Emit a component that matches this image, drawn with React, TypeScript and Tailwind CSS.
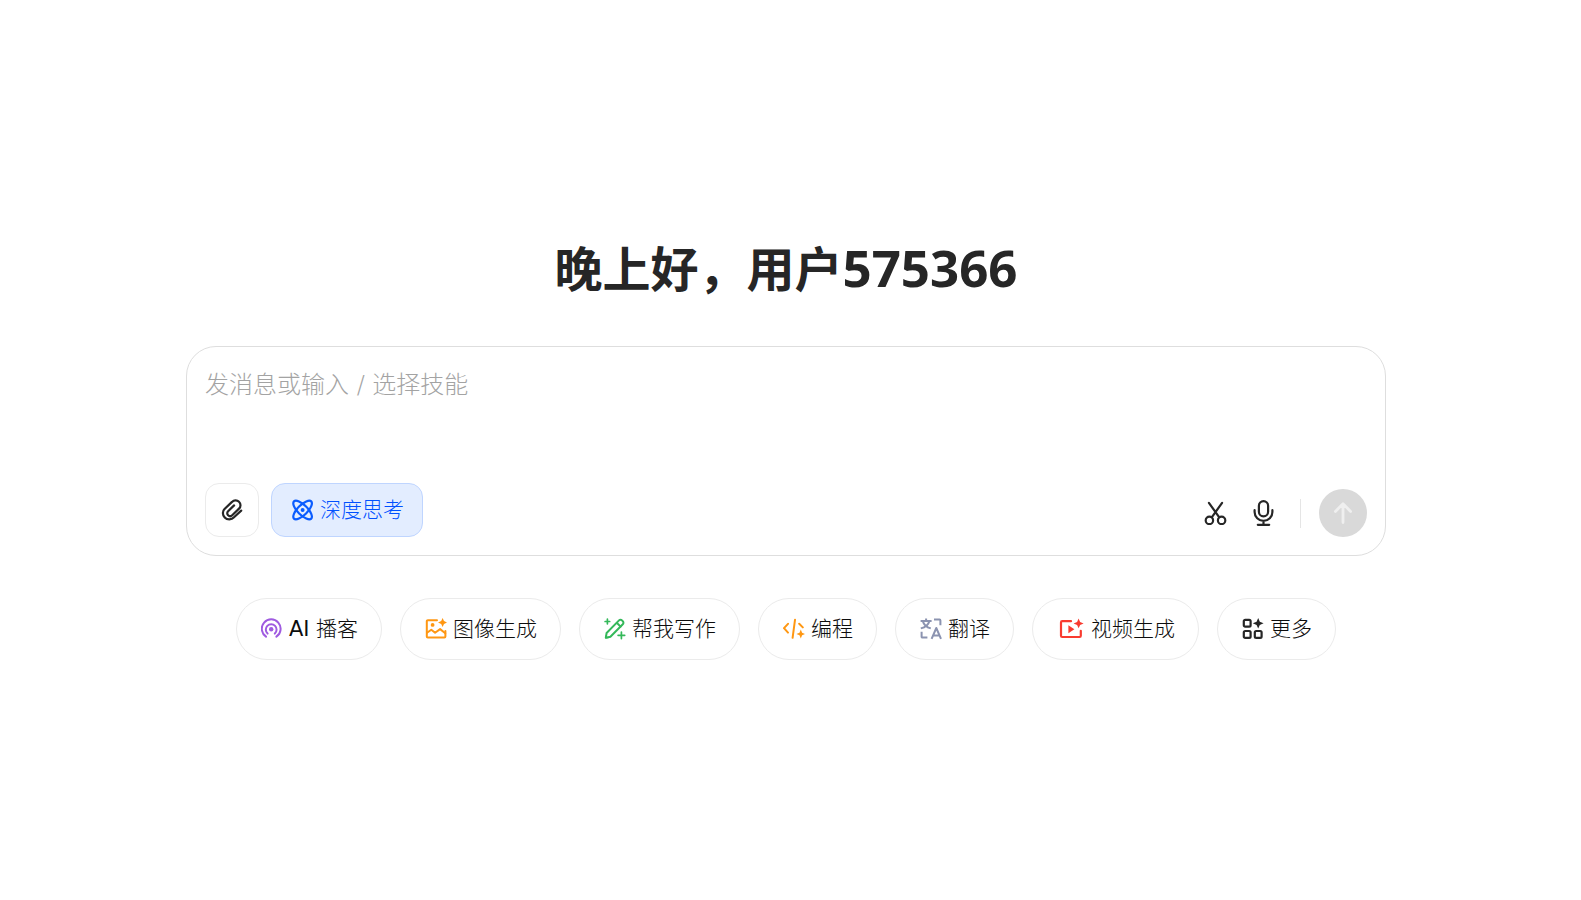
import { useState, type ReactNode } from 'react';

const PodcastIcon = () => (
  <svg className="h-[22px] w-[22px] shrink-0" viewBox="0 0 22 22" fill="none" stroke="#9f5be0" strokeWidth="2" strokeLinecap="round">
    <path d="M5 18.6A9.4 9.4 0 1 1 15.4 18.6" />
    <path d="M6.6 15.6A5.4 5.4 0 1 1 13.8 15.6" />
    <circle cx="10.2" cy="11.2" r="2.2" fill="#9f5be0" stroke="none" />
  </svg>
);

const ImageIcon = () => (
  <svg className="h-[22px] w-[22px] shrink-0" viewBox="0 0 22 22" fill="none" stroke="#ff9712" strokeWidth="2" strokeLinecap="round" strokeLinejoin="round">
    <path d="M12 2.2H2.8a1 1 0 0 0-1 1v15.4a1 1 0 0 0 1 1h16.6a1 1 0 0 0 1-1V13" />
    <path d="M2 14.8l4.3-3.1 3.8 3 5-3.6 5.2 4.1" />
    <circle cx="7.6" cy="6.9" r="1.9" fill="#ff9712" stroke="none" />
    <path d="M17.6 0l1.4 3.1 3.2 1.4-3.2 1.4L17.6 9l-1.4-3.1L13 4.5l3.2-1.4z" fill="#ff9712" stroke="none" />
  </svg>
);

const WriteIcon = () => (
  <svg className="h-[22px] w-[22px] shrink-0" viewBox="0 0 22 22" fill="none" stroke="#34b85a" strokeWidth="2" strokeLinecap="round" strokeLinejoin="round">
    <path d="M1.8 19.8l.8-4.8L15 2.4a2.1 2.1 0 0 1 3 0l.8.8a2.1 2.1 0 0 1 0 3L6.4 18.8z" />
    <path d="M13.2 5.2l3.4 3.4" />
    <path d="M1.5 17l3.2 3.2-3.4.4z" fill="#34b85a" stroke="none" />
    <path d="M3.4 1.2v4.6M1.1 3.5h4.6M17.4 14v6.6M14.1 17.3h6.6" strokeWidth="1.7" />
  </svg>
);

const CodeIcon = () => (
  <svg className="h-[22px] w-[22px] shrink-0" viewBox="0 0 22 22" fill="none" stroke="#ff9712" strokeWidth="2" strokeLinecap="round" strokeLinejoin="round">
    <path d="M5 5.8L1 10.2l4 4.4M12 1.8l-2.4 18M16.2 5.8l3.6 3.6" />
    <path d="M17.8 11.6l1.3 3.1 3.1 1.3-3.1 1.3-1.3 3.1-1.3-3.1-3.1-1.3 3.1-1.3z" fill="#ff9712" stroke="none" />
  </svg>
);

const TranslateIcon = () => (
  <svg className="h-[22px] w-[22px] shrink-0" viewBox="0 0 22 22" fill="none" stroke="#8b93b0" strokeWidth="2" strokeLinejoin="round">
    <path d="M.6 3h11M6.1.4V3M3 3.4c.8 3.3 3.4 5.7 7.8 7M9.2 3.4c-.8 3.3-3.6 5.7-8.4 7" />
    <path d="M14 1.6h5.6a.8.8 0 0 1 .8.8v4.8M1.6 13.8v5a.8.8 0 0 0 .8.8h5" />
    <path d="M11.6 20.8l4.7-10.8 4.7 10.8M13 17.4h6.6" />
  </svg>
);

const VideoIcon = () => (
  <svg className="h-[22px] w-7 shrink-0" viewBox="1 0 28 22" fill="none" stroke="#f93b30" strokeWidth="2.2" strokeLinecap="round" strokeLinejoin="round">
    <path d="M15 3.2H6.2a1.2 1.2 0 0 0-1.2 1.2v13.4a1.2 1.2 0 0 0 1.2 1.2h17.4a1.2 1.2 0 0 0 1.2-1.2v-5" />
    <path d="M12.4 7.2l6 4-6 4z" fill="#f93b30" stroke="none" />
    <path d="M22.6.6l1.5 3.3 3.5 1.5-3.5 1.5-1.5 3.3-1.5-3.3-3.5-1.5 3.5-1.5z" fill="#f93b30" stroke="none" />
  </svg>
);

const MoreIcon = () => (
  <svg className="h-[22px] w-[22px] shrink-0" viewBox="0 0 22 22" fill="none" stroke="#262626" strokeWidth="2.2">
    <rect x="1.8" y="1.8" width="6.8" height="6.8" rx="1.4" />
    <rect x="1.8" y="13" width="6.8" height="6.8" rx="1.4" />
    <rect x="12.8" y="13" width="6.8" height="6.8" rx="1.4" />
    <path d="M16.2 0l1.6 3.7 3.8 1.6-3.8 1.6-1.6 3.7-1.6-3.7-3.8-1.6 3.8-1.6z" fill="#262626" stroke="none" />
  </svg>
);

const ClipIcon = () => (
  <svg className="h-[22px] w-[22px]" viewBox="0 0 22 22" fill="none" stroke="#262626" strokeWidth="2.2" strokeLinecap="round" strokeLinejoin="round">
    <path d="M20.2 11.6l-7.2 6.7a6.3 6.3 0 0 1-9.3.1 6 6 0 0 1 .1-8.7l7.2-6.8a4.9 4.9 0 0 1 7-.1 4.6 4.6 0 0 1 0 6.8l-6.8 6.6a2.9 2.9 0 0 1-4.1 0 2.8 2.8 0 0 1 0-4l6-5.8" />
  </svg>
);

const ThinkIcon = () => (
  <svg className="h-[22px] w-[22px]" viewBox="0 0 22 22" fill="none" stroke="#0a5cff" strokeWidth="2.2">
    <ellipse cx="10.6" cy="11" rx="12.2" ry="4.9" transform="rotate(45 10.6 11)" />
    <ellipse cx="10.6" cy="11" rx="12.2" ry="4.9" transform="rotate(-45 10.6 11)" />
    <circle cx="10.6" cy="11" r="2" fill="#0a5cff" stroke="none" />
  </svg>
);

const ScissorsIcon = () => (
  <svg className="h-6 w-6" viewBox="0 0 24 24" fill="none" stroke="#262626" strokeWidth="2.2" strokeLinecap="round">
    <path d="M4.9 1.8l10 14M18.1 1.8l-10 14" />
    <circle cx="5.4" cy="19.4" r="3.7" />
    <circle cx="17.6" cy="19.4" r="3.7" />
  </svg>
);

const MicIcon = () => (
  <svg className="h-[26px] w-6" viewBox="0 0 24 26" fill="none" stroke="#262626" strokeWidth="2.2" strokeLinecap="round">
    <rect x="6.9" y="1.2" width="9.2" height="15.2" rx="4.6" />
    <path d="M2.6 10.2v1.8a8.9 8.9 0 0 0 17.8 0v-1.8M11.5 21v3.6M5.8 24.8h11.4" />
  </svg>
);

interface Skill {
  id: string;
  label: ReactNode;
  icon: ReactNode;
}

const skills: Skill[] = [
  { id: 'podcast', label: <><span className="font-normal">AI </span>播客</>, icon: <PodcastIcon /> },
  { id: 'image', label: '图像生成', icon: <ImageIcon /> },
  { id: 'write', label: '帮我写作', icon: <WriteIcon /> },
  { id: 'code', label: '编程', icon: <CodeIcon /> },
  { id: 'translate', label: '翻译', icon: <TranslateIcon /> },
  { id: 'video', label: '视频生成', icon: <VideoIcon /> },
  { id: 'more', label: '更多', icon: <MoreIcon /> },
];

export default function App() {
  const [message, setMessage] = useState('');
  const [deepThink, setDeepThink] = useState(true);

  return (
    <main className="flex min-h-screen flex-col items-center bg-white pt-[234px] pr-[9px] font-['DejaVu_Sans','Noto_Sans_CJK_SC',sans-serif] text-[#262626]">
      <h1 className="font-['Noto_Sans','Noto_Sans_CJK_SC',sans-serif] text-5xl leading-[66px] font-bold">
        晚上好，用户<span className="text-[51px]">575366</span>
      </h1>

      <form
        onSubmit={(e) => e.preventDefault()}
        className="mt-11 flex w-full max-w-[1200px] flex-col justify-between rounded-[30px] border border-[#dedede] px-[18px] pt-5 pb-[18px]"
      >
        <textarea
          aria-label="发消息"
          value={message}
          onChange={(e) => setMessage(e.target.value)}
          placeholder="发消息或输入 / 选择技能"
          className="h-[116px] w-full resize-none text-2xl leading-9 font-light outline-none placeholder:text-[#a3a3a3]"
        />
        <div className="flex items-end justify-between">
          <div className="flex gap-3">
            <button type="button" aria-label="上传附件" className="flex h-[54px] w-[54px] items-center justify-center rounded-[14px] border border-[#ebebeb]">
              <ClipIcon />
            </button>
            <button
              type="button"
              aria-pressed={deepThink}
              onClick={() => setDeepThink(!deepThink)}
              className="flex h-[54px] items-center gap-1.5 rounded-[14px] border border-[#bfd5ff] bg-[#e3edff] pr-[18px] pl-5 text-[21px] font-light text-[#0050ff]"
            >
              <ThinkIcon />
              <span className="pt-0.5">深度思考</span>
            </button>
          </div>
          <div className="flex h-12 items-center">
            <button type="button" aria-label="截图" className="flex h-12 w-12 items-center justify-center">
              <ScissorsIcon />
            </button>
            <button type="button" aria-label="语音输入" className="flex h-12 w-12 items-center justify-center">
              <MicIcon />
            </button>
            <div className="mr-[18px] ml-3 h-[29px] w-px bg-[#e5e5e5]" />
            <button type="submit" aria-label="发送" className="flex h-12 w-12 items-center justify-center rounded-full bg-[#d9d9d9]">
              <svg className="h-6 w-6" viewBox="0 0 24 24" fill="none" stroke="#efefef" strokeWidth="2.8" strokeLinecap="round" strokeLinejoin="round">
                <path d="M12 21.5V3M4.4 10.4L12 2.8l7.6 7.6" />
              </svg>
            </button>
          </div>
        </div>
      </form>

      <div className="mt-[42px] flex flex-wrap justify-center gap-[18px]">
        {skills.map((skill) => (
          <button key={skill.id} type="button" className="flex h-[62px] items-center gap-1.5 rounded-full border border-[#ebebeb] pr-[23px] pl-6 text-[21px] font-light text-[#0d0d0d]">
            {skill.icon}
            <span className="pt-0.5">{skill.label}</span>
          </button>
        ))}
      </div>
    </main>
  );
}
